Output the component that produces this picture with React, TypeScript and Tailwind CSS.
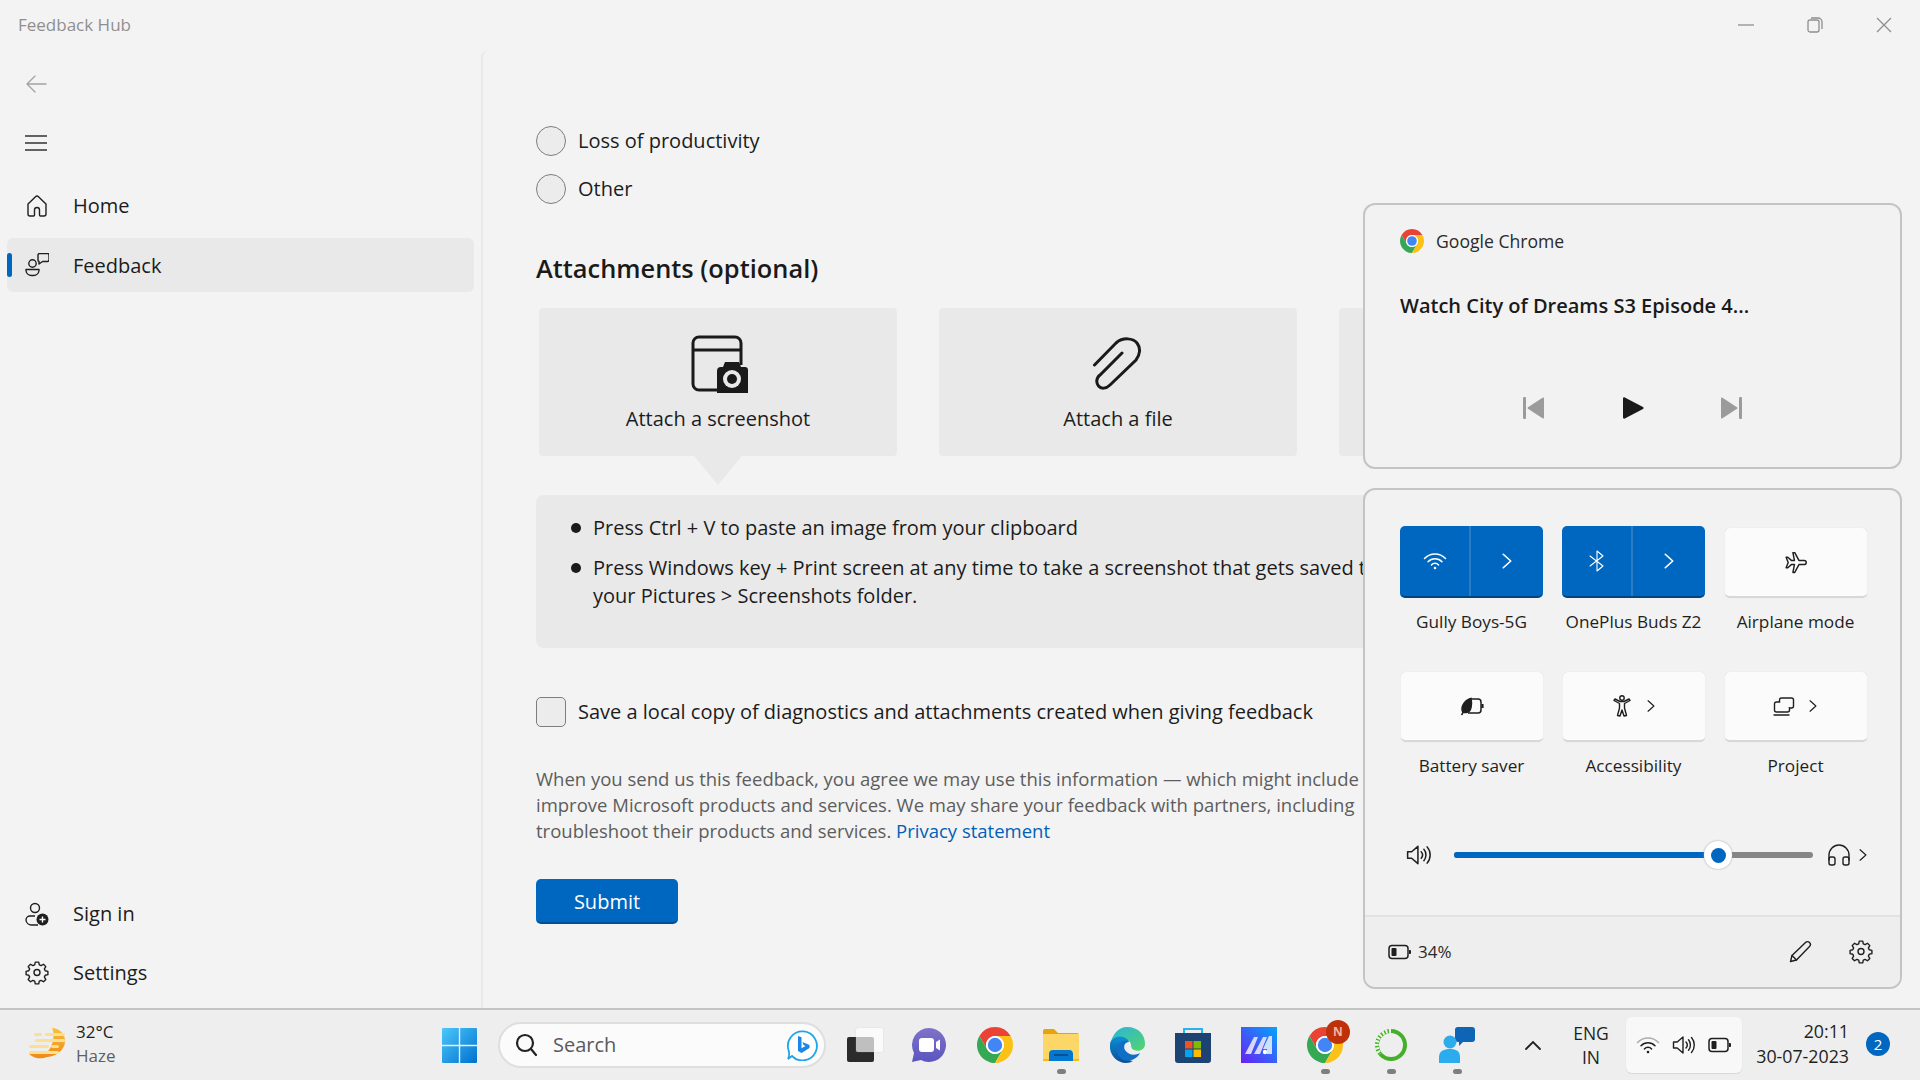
import React from "react";

const ChromeIcon: React.FC<{ size: number }> = ({ size }) => (
  <svg width={size} height={size} viewBox="4 4 40 40">
    <path d="M24 4A20 20 0 0 1 41.32 14H24A10 10 0 0 0 15.34 29L6.68 14A20 20 0 0 1 24 4Z" fill="#ea4335" />
    <path d="M6.68 14L15.34 29A10 10 0 0 0 32.66 29L24 44A20 20 0 0 1 6.68 14Z" fill="#34a853" />
    <path d="M24 44L32.66 29A10 10 0 0 0 24 14H41.32A20 20 0 0 1 24 44Z" fill="#fbc116" />
    <circle cx="24" cy="24" r="10" fill="#fff" />
    <circle cx="24" cy="24" r="8" fill="#4285f4" />
  </svg>
);

const Line: React.FC<{ size?: number; sw?: number; color?: string; children: React.ReactNode }> = ({
  size = 24,
  sw = 1.5,
  color = "#1f1f1f",
  children,
}) => (
  <svg width={size} height={size} viewBox="0 0 24 24" fill="none" stroke={color} strokeWidth={sw} strokeLinecap="round" strokeLinejoin="round">
    {children}
  </svg>
);

const GEAR =
  "M10.3 2.6h3.4l.6 2.7 1.8.8 2.4-1.4 2.3 2.4-1.4 2.3.8 1.9 2.7.6v3.3l-2.7.6-.8 1.9 1.4 2.3-2.3 2.4-2.4-1.4-1.8.8-.6 2.7h-3.4l-.6-2.7-1.8-.8-2.4 1.4-2.3-2.4 1.4-2.3-.8-1.9-2.7-.6v-3.3l2.7-.6.8-1.9-1.4-2.3 2.3-2.4 2.4 1.4 1.8-.8z";

const GearIcon: React.FC<{ size?: number }> = ({ size = 24 }) => (
  <Line size={size} sw={1.4}>
    <g transform="translate(0 -1.4) scale(1 .99)">
      <path d={GEAR} />
      <circle cx="12" cy="13" r="3" />
    </g>
  </Line>
);

const WifiIcon: React.FC<{ color: string; size?: number; faint?: boolean }> = ({ color, size = 24, faint }) => (
  <Line size={size} color={color} sw={1.5}>
    <path d="M1.500 9.500a14.500 14.500 0 0 1 21 0" opacity={faint ? 0.35 : 1} />
    <path d="M5 12.800a9.800 9.800 0 0 1 14 0" />
    <path d="M8.400 15.900a5 5 0 0 1 7.200 0" />
    <circle cx="12" cy="19" r="1.300" fill={color} stroke="none" />
  </Line>
);

const SpeakerIcon: React.FC<{ size?: number }> = ({ size = 24 }) => (
  <Line size={size} sw={1.4}>
    <path d="M1.500 9h3.700L11 4v16l-5.800-5H1.500z" />
    <path d="M14 9a4.500 4.500 0 0 1 0 6" />
    <path d="M16.500 6.800a8 8 0 0 1 0 10.400" />
    <path d="M19.500 4.500a11.500 11.500 0 0 1 0 15" />
  </Line>
);

const BatteryIcon: React.FC<{ size?: number }> = ({ size = 24 }) => (
  <svg width={size} height={size} viewBox="0 0 24 24" fill="none">
    <rect x="1" y="5.500" width="19" height="13" rx="3" stroke="#1f1f1f" strokeWidth="1.500" />
    <rect x="3.500" y="8" width="5" height="8" rx="1" fill="#1f1f1f" />
    <path d="M21 10h1a1 1 0 0 1 1 1v2a1 1 0 0 1-1 1h-1z" fill="#1f1f1f" />
  </svg>
);

const Chevron: React.FC<{ size?: number; color?: string; sw?: number }> = ({ size = 16, color = "#1f1f1f", sw = 2 }) => (
  <Line size={size} color={color} sw={sw}>
    <path d="M7 3l10 9-10 9" />
  </Line>
);

const NavItem: React.FC<{ icon: React.ReactNode; label: string; active?: boolean }> = ({ icon, label, active }) => (
  <div className={`relative flex h-[54px] items-center rounded-md ${active ? "bg-[#e9e9e9]" : ""}`}>
    {active && <span className="absolute left-0 top-[15px] h-6 w-[5px] rounded-full bg-[#0067c0]" />}
    <span className="ml-[18px] flex w-[24px] justify-center">{icon}</span>
    <span className={`ml-[24px] text-[20px] text-[#1c1c1c] ${active ? "pt-[2px]" : ""}`}>{label}</span>
  </div>
);

const Radio: React.FC<{ label: string }> = ({ label }) => (
  <div className="flex h-[30px] items-center">
    <span className="h-[30px] w-[30px] rounded-full border-[1.5px] border-[#7d7d7d] bg-[#ececec]" />
    <span className="ml-3 text-[20px] text-[#1c1c1c]">{label}</span>
  </div>
);

const AttachCard: React.FC<{ icon?: React.ReactNode; label?: string }> = ({ icon, label }) => (
  <div className="flex h-[148px] w-[358px] shrink-0 flex-col items-center rounded-[4px] bg-[#e9e9e9] pt-[27px]">
    <div className="flex h-[58px] items-center justify-center">{icon}</div>
    {label && <span className="mt-[12px] text-[20px] leading-7 text-[#1c1c1c]">{label}</span>}
  </div>
);

const Tile: React.FC<{ children: React.ReactNode; label: string; top?: boolean }> = ({ children, label, top }) => (
  <div className={`flex w-[143px] flex-col items-center ${top ? "pt-[2px]" : ""}`}>
    <div className="flex h-[70px] w-[142px] items-center justify-center rounded-[5px] border-b-2 border-[#d8d8d8] bg-[#fbfbfb] shadow-[0_0_1px_#d0d0d0]">
      {children}
    </div>
    <span className="mt-[12px] whitespace-nowrap text-[17.200px] leading-6 text-[#1f1f1f]">{label}</span>
  </div>
);

const BlueTile: React.FC<{ icon: React.ReactNode; label: string }> = ({ icon, label }) => (
  <div className="flex w-[143px] flex-col items-center">
    <div className="flex h-[72px] w-[143px] rounded-[5px] border-b-2 border-[#00457f] bg-[#0067c0]">
      <div className="flex w-[71px] items-center justify-center border-r-2 border-[#2a7cc6]">{icon}</div>
      <div className="flex flex-1 items-center justify-center">
        <Chevron size={18} color="#ffffff" sw={2.200} />
      </div>
    </div>
    <span className="mt-[12px] whitespace-nowrap text-[17.200px] leading-6 text-[#1f1f1f]">{label}</span>
  </div>
);

const MediaFlyout: React.FC = () => (
  <div className="absolute left-[1363px] top-[203px] h-[266px] w-[539px] rounded-xl border-2 border-[#c4c4c4] bg-[#f2f2f2]">
    <div className="ml-[35px] mt-[22px] flex h-[28px] items-center">
      <ChromeIcon size={24} />
      <span className="ml-3 text-[17.600px] text-[#2a2a2a]">Google Chrome</span>
    </div>
    <div className="ml-[35px] mt-[37px] text-[20px] font-semibold leading-7 text-[#1a1a1a]">Watch City of Dreams S3 Episode 4...</div>
    <div className="ml-[156px] mt-[76px] flex items-center">
      <svg width="24" height="24" viewBox="0 0 24 24" fill="#9b9b9b">
        <rect x="2" y="1" width="3" height="22" rx="1" />
        <path d="M23 2.500v19a1 1 0 0 1-1.500.8L7 12.800a1 1 0 0 1 0-1.600L21.500 1.700a1 1 0 0 1 1.500.8z" />
      </svg>
      <svg className="ml-[76px]" width="24" height="24" viewBox="0 0 24 24" fill="#1a1a1a">
        <path d="M2 2.500v19c0 1 1 1.500 1.800 1L22 13a1.200 1.200 0 0 0 0-2L3.800 1.500C3 1 2 1.500 2 2.500z" />
      </svg>
      <svg className="ml-[75px]" width="24" height="24" viewBox="0 0 24 24" fill="#9b9b9b">
        <rect x="19" y="1" width="3" height="22" rx="1" />
        <path d="M1 2.500v19a1 1 0 0 0 1.500.8L17 12.800a1 1 0 0 0 0-1.600L2.500 1.700A1 1 0 0 0 1 2.500z" />
      </svg>
    </div>
  </div>
);

const QuickPanel: React.FC = () => (
  <div className="absolute left-[1363px] top-[488px] flex h-[501px] w-[539px] flex-col overflow-hidden rounded-xl border-2 border-[#c4c4c4] bg-[#f2f2f2]">
    <div className="ml-[35px] mt-[36px] grid w-[467px] grid-cols-3 gap-x-[19px] gap-y-[38px]">
      <BlueTile icon={<WifiIcon color="#ffffff" />} label="Gully Boys-5G" />
      <BlueTile
        icon={
          <Line size={24} color="#ffffff" sw={1.100}>
            <path d="M5 7l13 10-6 5V2l6 5-13 10" />
          </Line>
        }
        label="OnePlus Buds Z2"
      />
      <Tile top label="Airplane mode">
        <Line size={25} sw={1.400}>
          <path d="M3 7l2 5-2 5h1.600l3.400-3h3l-1.500 7.500h1.800l4-7.500h5a2 2 0 0 0 0-4h-5l-4-7.500H9.500L11 10H8L4.600 7z" />
        </Line>
      </Tile>
      <Tile label="Battery saver">
        <svg width="24" height="24" viewBox="0 0 24 24" fill="none" stroke="#1f1f1f" strokeWidth="1.500">
          <path d="M9 5h9a3 3 0 0 1 3 3v8a3 3 0 0 1-3 3H8" />
          <path d="M22.500 10v4" strokeWidth="2.200" />
          <path d="M1.500 21c1-1.500 1.500-2.500 1.500-2.500C.5 14 3 7 11 4.500c1 5 .5 12-3 13.500-1.500.6-3.500.5-5 .5" fill="#1f1f1f" />
        </svg>
      </Tile>
      <Tile label="Accessibility">
        <div className="flex items-center gap-[10px]">
          <Line size={24} sw={1.400}>
            <circle cx="12" cy="4" r="2.200" />
            <path d="M4 6.500l5.500 3V14L7.500 21.500l2.500.5 2-6 2 6 2.500-.5L14.500 14V9.500L20 6.500l-1-1.500-5 2.500h-4L5 5z" />
          </Line>
          <Chevron size={14} />
        </div>
      </Tile>
      <Tile label="Project">
        <div className="flex items-center gap-[10px]">
          <Line size={24} sw={1.400}>
            <rect x="7.500" y="4" width="14" height="10" rx="2" />
            <path d="M7.500 8H4.500a2 2 0 0 0-2 2v6a2 2 0 0 0 2 2h11a2 2 0 0 0 2-2v-2" fill="#fbfbfb" />
            <path d="M2 21h15" />
          </Line>
          <Chevron size={14} />
        </div>
      </Tile>
    </div>
    <div className="mt-[62px] flex h-[30px] items-center pl-[41px]">
      <SpeakerIcon size={26} />
      <div className="relative ml-[22px] flex h-[6px] w-[359px] rounded-full bg-[#868686]">
        <div className="h-[6px] w-[264px] rounded-full bg-[#0067c0]" />
        <span className="absolute left-[250px] top-[-11px] flex h-[28px] w-[28px] items-center justify-center rounded-full bg-white shadow-[0_0_2px_#9a9a9a]">
          <span className="h-[15px] w-[15px] rounded-full bg-[#0067c0]" />
        </span>
      </div>
      <span className="ml-[14px]">
        <Line size={24} sw={1.400}>
          <path d="M2 17v-5a10 10 0 0 1 20 0v5" />
          <rect x="2" y="14" width="6" height="8" rx="2" />
          <rect x="16" y="14" width="6" height="8" rx="2" />
        </Line>
      </span>
      <span className="ml-[5px]">
        <Chevron size={14} />
      </span>
    </div>
    <div className="mt-auto flex h-[72px] items-center border-t-2 border-[#e2e2e2] bg-[#eeeeee] pl-[23px]">
      <BatteryIcon size={24} />
      <span className="ml-[6px] text-[17px] text-[#2a2a2a]">34%</span>
      <span className="ml-auto">
        <Line size={24} sw={1.400}>
          <path d="M2.500 21.500l1.500-6L17.500 2.500a2.400 2.400 0 0 1 4 4L8.500 20z" />
          <path d="M4 15.500l4.500 4.500" />
        </Line>
      </span>
      <span className="ml-[37px] mr-[27px]">
        <GearIcon size={24} />
      </span>
    </div>
  </div>
);

const TaskSlot: React.FC<{ children: React.ReactNode; running?: boolean }> = ({ children, running }) => (
  <div className="relative flex h-full w-[66px] shrink-0 items-center justify-center">
    {children}
    {running && <span className="absolute bottom-[6px] h-[5px] w-[9px] rounded-full bg-[#7f7f7f]" />}
  </div>
);

const Taskbar: React.FC = () => (
  <div className="flex h-[72px] items-center border-t-2 border-[#c4c4c4] bg-[#eeeeee]">
    <div className="flex w-[442px] shrink-0 items-center pl-[28px]">
      <svg width="38" height="36" viewBox="0 0 38 36">
        <defs>
          <linearGradient id="sun" x1="0" y1="0" x2="0" y2="1">
            <stop offset="0" stopColor="#f9c13c" />
            <stop offset="1" stopColor="#ee8a16" />
          </linearGradient>
        </defs>
        <path d="M24 1a17 17 0 1 1-23 26h23A12 12 0 0 0 24 1z" fill="url(#sun)" />
        <path d="M14 29a17 17 0 0 0 22-12c0-6-3-12-12-16 4 8 0 24-10 28z" fill="url(#sun)" />
        <g fill="#fadf94">
          <rect x="6" y="6" width="8" height="3" rx="1.500" />
          <rect x="17" y="6" width="20" height="3" rx="1.500" />
          <rect x="7" y="12" width="30" height="3" rx="1.500" />
          <rect x="1" y="18" width="20" height="3" rx="1.500" />
          <rect x="23" y="18" width="8" height="3" rx="1.500" />
          <rect x="1" y="24" width="30" height="3" rx="1.500" />
        </g>
      </svg>
      <div className="ml-[10px] mt-[-2px] flex flex-col">
        <span className="text-[17px] leading-[24px] text-[#1f1f1f]">32°C</span>
        <span className="text-[17px] leading-[24px] text-[#5f5f5f]">Haze</span>
      </div>
    </div>
    <svg width="35" height="35" viewBox="0 0 35 35" className="shrink-0">
      <defs>
        <linearGradient id="win" x1="0" y1="0" x2="1" y2="1">
          <stop offset="0" stopColor="#4cc8fb" />
          <stop offset="1" stopColor="#0071cf" />
        </linearGradient>
      </defs>
      <path d="M1 0H16.800V16.800H0V1a1 1 0 0 1 1-1zM18.200 0H34a1 1 0 0 1 1 1V16.800H18.200zM0 18.200H16.800V35H1a1 1 0 0 1-1-1zM18.200 18.200H35V34a1 1 0 0 1-1 1H18.200z" fill="url(#win)" />
    </svg>
    <div className="ml-[21px] flex h-[46px] w-[328px] shrink-0 items-center rounded-full border-2 border-[#dedede] bg-[#fbfbfb] pl-[15px] pr-[6px]">
      <svg width="22" height="24" viewBox="0 0 22 24" fill="none" stroke="#222" strokeWidth="2.200" strokeLinecap="round">
        <circle cx="10" cy="10" r="8" />
        <path d="M16 16l5 6" />
      </svg>
      <span className="ml-[16px] text-[20px] text-[#5a5a5a]">Search</span>
      <svg className="ml-auto" width="32" height="32" viewBox="0 0 32 32" fill="none">
        <path d="M2 30l4-3A14.500 14.500 0 1 0 2.500 21c1 3 1 6-.5 9z" stroke="#1fa5e5" strokeWidth="1.800" fill="#fff" />
        <path d="M12 7l3.500 1.200v11l4-2.200-2-1-1-3 7 3v3l-8 5-3.500-2z" fill="#1a86e8" />
      </svg>
    </div>
    <div className="ml-[4px] flex h-full shrink-0 items-center">
      <TaskSlot>
        <div className="relative ml-[3px] h-[34px] w-[36px]">
          <span className="absolute bottom-0 left-0 h-[25px] w-[27px] rounded-[2px] bg-[#2b2b2b]" />
          <span className="absolute right-0 top-0 h-[24px] w-[27px] rounded-[2px] bg-white/70 shadow-[0_0_1px_#bbb]" />
        </div>
      </TaskSlot>
      <TaskSlot>
        <svg width="36" height="36" viewBox="0 0 36 36">
          <defs>
            <linearGradient id="meet" x1="0" y1="0" x2="0" y2="1">
              <stop offset="0" stopColor="#7f72c8" />
              <stop offset="1" stopColor="#5a55c0" />
            </linearGradient>
          </defs>
          <path d="M18 1a17 17 0 1 1-8 32l-9 2 2-9A17 17 0 0 1 18 1z" fill="url(#meet)" />
          <rect x="8" y="11" width="15" height="14" rx="3" fill="#fff" />
          <path d="M25 15l4-2.500v11L25 21z" fill="#fff" />
        </svg>
      </TaskSlot>
      <TaskSlot>
        <ChromeIcon size={36} />
      </TaskSlot>
      <TaskSlot running>
        <svg width="36" height="34" viewBox="0 0 36 34">
          <path d="M0 3a2 2 0 0 1 2-2h9l4 4h19a2 2 0 0 1 2 2v4H0z" fill="#e5a50a" />
          <path d="M0 6h36v27H0z" fill="#fcd667" />
          <path d="M6 33v-7a4 4 0 0 1 4-4h16a4 4 0 0 1 4 4v7z" fill="#0478d0" />
          <rect x="11" y="26" width="14" height="2" fill="#0a4f8f" />
          <rect x="0" y="31" width="6" height="2" fill="#f7bb12" />
          <rect x="30" y="31" width="6" height="2" fill="#f7bb12" />
        </svg>
      </TaskSlot>
      <TaskSlot>
        <svg width="36" height="36" viewBox="0 0 36 36">
          <defs>
            <linearGradient id="edge" x1="0" y1="0" x2="1" y2="1">
              <stop offset="0" stopColor="#2bb3dc" />
              <stop offset="1" stopColor="#52d66b" />
            </linearGradient>
            <linearGradient id="edge2" x1="0" y1="0" x2="0" y2="1">
              <stop offset="0" stopColor="#0c8fd6" />
              <stop offset="1" stopColor="#0b4f9a" />
            </linearGradient>
          </defs>
          <path d="M18 0C30 0 36 8 36 17c0 6-6 8-11 6-4-1.500-2-5-4-8-4-5-14-3-20 3C3 8 9 0 18 0z" fill="url(#edge)" />
          <path d="M1 18c0-6 7-10 13-8 6 2 6 5 6 5-5-1-10 3-9 9 1 5 6 9 13 10-2 1-4 2-7 2C8 36 0 28 1 18z" fill="url(#edge2)" />
          <path d="M20 15c-4 0-6 4-4 8 3 5 10 6 15 3-3 6-10 9-16 7-7-3-9-11-5-16 3-4 8-4 10-2z" fill="#0f6fc4" />
        </svg>
      </TaskSlot>
      <TaskSlot>
        <svg width="36" height="36" viewBox="0 0 36 36">
          <path d="M9 6V2h18v4" fill="none" stroke="#28b4ea" strokeWidth="2" />
          <path d="M0 6h36v27a3 3 0 0 1-3 3H3a3 3 0 0 1-3-3z" fill="#1d4372" />
          <rect x="10" y="14" width="7.500" height="7.500" fill="#f25022" />
          <rect x="18.500" y="14" width="7.500" height="7.500" fill="#7fba00" />
          <rect x="10" y="22.500" width="7.500" height="7.500" fill="#00a4ef" />
          <rect x="18.500" y="22.500" width="7.500" height="7.500" fill="#ffb900" />
        </svg>
      </TaskSlot>
      <TaskSlot>
        <svg width="36" height="36" viewBox="0 0 36 36">
          <defs>
            <linearGradient id="mk" x1="0" y1="1" x2="1" y2="0">
              <stop offset="0" stopColor="#6a1ff5" />
              <stop offset="1" stopColor="#04a4fb" />
            </linearGradient>
          </defs>
          <rect width="36" height="36" fill="url(#mk)" />
          <path d="M4 27L13 10h4L10 27zM13 27l9-17h4l-7 17z" fill="#d9d6fa" />
          <path d="M28 9h3v18h-5v-5h-4z" fill="#cfe0fb" />
          <circle cx="24" cy="25" r="2.200" fill="#fff" />
        </svg>
      </TaskSlot>
      <TaskSlot running>
        <div className="relative">
          <ChromeIcon size={36} />
          <span className="absolute left-[19px] top-[-7px] flex h-[24px] w-[24px] items-center justify-center rounded-full bg-[#bf3209] text-[12px] font-bold text-[#eeb5a3]">
            N
          </span>
        </div>
      </TaskSlot>
      <TaskSlot running>
        <svg width="32" height="32" viewBox="0 0 32 32" fill="none">
          <circle cx="16" cy="16" r="14" stroke="#43b02a" strokeWidth="4" />
          <path d="M16 2A14 14 0 0 0 5 25" stroke="#eef7ea" strokeWidth="4" strokeDasharray="2 1.500" />
        </svg>
      </TaskSlot>
      <TaskSlot running>
        <svg width="36" height="36" viewBox="0 0 36 36">
          <path d="M16 2a3 3 0 0 1 3-2h14a3 3 0 0 1 3 3v9a3 3 0 0 1-3 3H24l-4 4v-4h-1a3 3 0 0 1-3-3z" fill="#0f65b5" />
          <circle cx="11" cy="15" r="6.500" fill="#2cacec" />
          <path d="M0 36v-6c0-6 5-8 11-8s10 2 10 8v6z" fill="#2cacec" />
        </svg>
      </TaskSlot>
    </div>
    <div className="ml-[33px] flex w-[20px] shrink-0 justify-center">
      <svg width="18" height="12" viewBox="0 0 18 12" fill="none" stroke="#222" strokeWidth="1.800" strokeLinecap="round">
        <path d="M2 10l7-7 7 7" />
      </svg>
    </div>
    <div className="ml-[21px] flex w-[54px] shrink-0 flex-col items-center text-[17.500px] leading-[24px] text-[#1f1f1f]">
      <span>ENG</span>
      <span>IN</span>
    </div>
    <div className="ml-[8px] flex h-[56px] w-[116px] shrink-0 items-center justify-center gap-[12px] rounded-md bg-[#f8f8f8] shadow-[0_1px_1px_#d8d8d8]">
      <WifiIcon color="#1f1f1f" faint />
      <SpeakerIcon />
      <BatteryIcon />
    </div>
    <div className="ml-auto mr-[71px] mt-[-2px] flex flex-col items-end text-[17.800px] leading-[25px] text-[#1f1f1f]">
      <span>20:11</span>
      <span>30-07-2023</span>
    </div>
    <span className="absolute left-[1866px] top-[1032px] flex h-[24px] w-[24px] items-center justify-center rounded-full bg-[#0067c0] text-[15px] text-white">
      2
    </span>
  </div>
);

const Sidebar: React.FC = () => (
  <div className="flex w-[481px] shrink-0 flex-col gap-[5px] pb-[8px] pl-[7px] pr-[7px]">
    <div className="flex h-[68px] items-center pl-[17px]">
      <Line size={24} color="#a3a3a3" sw={1.300}>
        <path d="M22 12H3M11 4l-8 8 8 8" />
      </Line>
    </div>
    <div className="mb-[6px] mt-[-5px] flex h-[50px] items-center pl-[17px]">
      <svg width="24" height="18" viewBox="0 0 24 18" stroke="#333" strokeWidth="1.600">
        <path d="M1 2h22M1 9h22M1 16h22" />
      </svg>
    </div>
    <NavItem
      label="Home"
      icon={
        <Line size={24} sw={1.400}>
          <path d="M3 10l7.500-7.300a2.200 2.200 0 0 1 3 0L21 10v10a2 2 0 0 1-2 2h-3.500a1 1 0 0 1-1-1v-5a2.500 2.500 0 0 0-5 0v5a1 1 0 0 1-1 1H5a2 2 0 0 1-2-2z" />
        </Line>
      }
    />
    <NavItem
      active
      label="Feedback"
      icon={
        <Line size={24} sw={1.400}>
          <circle cx="7.500" cy="10.500" r="3.700" />
          <path d="M1 16.500h13v1a5.500 5.500 0 0 1-5.500 5h-2A5.500 5.500 0 0 1 1 17.500z" />
          <path d="M13 2a1.500 1.500 0 0 1 1.500-1.500h8A1.500 1.500 0 0 1 24 2v5a1.500 1.500 0 0 1-1.500 1.500h-5L14 11V8.500a1.500 1.500 0 0 1-1-1.500z" />
        </Line>
      }
    />
    <div className="mt-auto" />
    <NavItem
      label="Sign in"
      icon={
        <svg width="24" height="24" viewBox="0 0 24 24" fill="none" stroke="#1f1f1f" strokeWidth="1.400">
          <circle cx="10" cy="6" r="4.500" />
          <path d="M13 23H6.500A5.500 5.500 0 0 1 1 18a4 4 0 0 1 4-4h5" />
          <circle cx="17.500" cy="17.500" r="6" fill="#1f1f1f" stroke="none" />
          <path d="M17.500 14.500v6M14.500 17.500h6" stroke="#fff" />
        </svg>
      }
    />
    <NavItem label="Settings" icon={<GearIcon />} />
  </div>
);

const MainContent: React.FC = () => (
  <div className="relative flex-1 overflow-hidden rounded-tl-lg border-l-2 border-[#e8e8e8] pl-[53px] pt-[76px]">
    <div className="flex flex-col gap-[18px]">
      <Radio label="Loss of productivity" />
      <Radio label="Other" />
    </div>
    <h2 className="mt-[46px] h-[36px] text-[25.400px] font-semibold leading-[36px] text-[#1a1a1a]">Attachments (optional)</h2>
    <div className="ml-[3px] mt-[22px] flex gap-[42px]">
      <AttachCard
        label="Attach a screenshot"
        icon={
          <svg className="ml-[3px]" width="58" height="58" viewBox="0 0 58 58" fill="none">
            <path d="M26 55H8a6 6 0 0 1-6-6V8a6 6 0 0 1 6-6h36a6 6 0 0 1 6 6v22" stroke="#1a1a1a" strokeWidth="3" />
            <path d="M2 15h48" stroke="#1a1a1a" strokeWidth="3" />
            <path d="M26 36a4 4 0 0 1 4-4h2l2-5h14l2 5h4a3 3 0 0 1 3 3v23H26z" fill="#1a1a1a" />
            <circle cx="41" cy="44" r="9" fill="#e9e9e9" />
            <circle cx="41" cy="44" r="5" fill="#1a1a1a" />
          </svg>
        }
      />
      <AttachCard
        label="Attach a file"
        icon={
          <svg width="50" height="54" viewBox="0 0 50 54" fill="none" stroke="#1a1a1a" strokeWidth="3" strokeLinecap="round">
            <path d="M1.500 28L23 6C30 0 40 1 44 6C48 11 47 18 43 23L17 48C13 52 8 52 5.500 49C3 46 3 41 7 38L29 16" />
          </svg>
        }
      />
      <AttachCard />
    </div>
    <div className="ml-[158px] mb-[10px] h-[29px] w-[48px] bg-[#e9e9e9] [clip-path:polygon(0_0,100%_0,50%_100%)]" />
    <div className="h-[153px] w-[1100px] rounded-lg bg-[#e9e9e9] pl-[35px] pt-[19px] text-[20px] leading-7 text-[#1c1c1c]">
      <div className="flex items-center gap-[12px]">
        <span className="h-[10px] w-[10px] rounded-full bg-[#1a1a1a]" />
        <span>Press Ctrl + V to paste an image from your clipboard</span>
      </div>
      <div className="mt-[12px] flex gap-[12px]">
        <span className="mt-[9px] h-[10px] w-[10px] shrink-0 rounded-full bg-[#1a1a1a]" />
        <span className="whitespace-nowrap">
          Press Windows key + Print screen at any time to take a screenshot that gets saved t
          <br />
          your Pictures &gt; Screenshots folder.
        </span>
      </div>
    </div>
    <div className="mt-[48px] flex h-[31px] items-center">
      <span className="h-[30px] w-[30px] rounded-[5px] border-[1.5px] border-[#7d7d7d] bg-[#ececec]" />
      <span className="ml-3 text-[20px] text-[#1c1c1c]">Save a local copy of diagnostics and attachments created when giving feedback</span>
    </div>
    <p className="mt-[39px] whitespace-nowrap text-[18.500px] leading-[26px] text-[#5d5d5d]">
      When you send us this feedback, you agree we may use this information — which might include
      <br />
      improve Microsoft products and services. We may share your feedback with partners, including
      <br />
      troubleshoot their products and services. <span className="text-[#005fb8]">Privacy statement</span>
    </p>
    <button className="mt-[35px] h-[45px] w-[142px] rounded-[5px] border-b-2 border-[#004f94] bg-[#0067c0] pt-[2px] text-[20px] text-white">Submit</button>
  </div>
);

export default function App() {
  return (
    <div className="relative flex h-[1080px] w-[1920px] flex-col overflow-hidden bg-[#f3f3f3] font-['Open_Sans','Noto_Sans',sans-serif]">
      <div className="flex h-[50px] shrink-0 items-center">
        <span className="ml-[18px] text-[17px] text-[#8f8f8f]">Feedback Hub</span>
        <div className="ml-auto flex items-center pr-[28px]">
          <svg width="16" height="16" viewBox="0 0 16 16" stroke="#8f8f8f" strokeWidth="1.300" fill="none">
            <path d="M0 8h16" />
          </svg>
          <svg className="ml-[53px]" width="16" height="16" viewBox="0 0 16 16" stroke="#8f8f8f" strokeWidth="1.300" fill="none">
            <rect x="1" y="3" width="11" height="12" rx="2" />
            <path d="M4 1h7a4 4 0 0 1 4 4v7" />
          </svg>
          <svg className="ml-[53px]" width="16" height="16" viewBox="0 0 16 16" stroke="#8f8f8f" strokeWidth="1.300" fill="none">
            <path d="M1 1l14 14M15 1L1 15" />
          </svg>
        </div>
      </div>
      <div className="flex min-h-0 flex-1">
        <Sidebar />
        <MainContent />
      </div>
      <Taskbar />
      <MediaFlyout />
      <QuickPanel />
    </div>
  );
}
